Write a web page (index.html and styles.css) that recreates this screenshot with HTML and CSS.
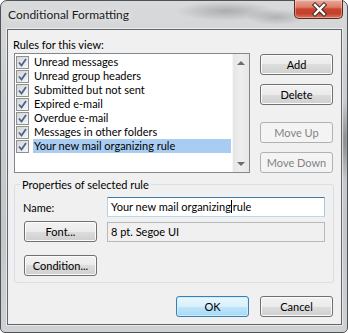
FILE: index.html
```html
<!DOCTYPE html>
<html lang="en">
<head>
  <meta charset="UTF-8" />
  <title>Conditional Formatting</title>
  <link rel="stylesheet" href="styles.css">
</head>
<body>
  <div class="window">
    <div class="titlebar">
      <span class="title">Conditional Formatting</span>
      <div class="close-btn">
        <svg width="49" height="18" viewBox="0 0 49 18">
          <path d="M20 5 L29 14 M29 5 L20 14" stroke="#3b2a26" stroke-width="4.4" stroke-linecap="square"/>
          <path d="M20 5 L29 14 M29 5 L20 14" stroke="#ffffff" stroke-width="2.4" stroke-linecap="square"/>
        </svg>
      </div>
    </div>

    <div class="client">
      <div class="rules-label">Rules for this view:</div>
      <div class="rules-row">
        <div class="listbox">
          <ul class="rule-list">
            <li class="rule"><span class="check"><svg width="11" height="11" viewBox="0 0 11 11"><path d="M2 5.5 L4.5 8.5 L9 2" fill="none" stroke="#4a6390" stroke-width="1.8"/></svg></span><span class="rule-text">Unread messages</span></li>
            <li class="rule"><span class="check"><svg width="11" height="11" viewBox="0 0 11 11"><path d="M2 5.5 L4.5 8.5 L9 2" fill="none" stroke="#4a6390" stroke-width="1.8"/></svg></span><span class="rule-text">Unread group headers</span></li>
            <li class="rule"><span class="check"><svg width="11" height="11" viewBox="0 0 11 11"><path d="M2 5.5 L4.5 8.5 L9 2" fill="none" stroke="#4a6390" stroke-width="1.8"/></svg></span><span class="rule-text">Submitted but not sent</span></li>
            <li class="rule"><span class="check"><svg width="11" height="11" viewBox="0 0 11 11"><path d="M2 5.5 L4.5 8.5 L9 2" fill="none" stroke="#4a6390" stroke-width="1.8"/></svg></span><span class="rule-text">Expired e-mail</span></li>
            <li class="rule"><span class="check"><svg width="11" height="11" viewBox="0 0 11 11"><path d="M2 5.5 L4.5 8.5 L9 2" fill="none" stroke="#4a6390" stroke-width="1.8"/></svg></span><span class="rule-text">Overdue e-mail</span></li>
            <li class="rule"><span class="check"><svg width="11" height="11" viewBox="0 0 11 11"><path d="M2 5.5 L4.5 8.5 L9 2" fill="none" stroke="#4a6390" stroke-width="1.8"/></svg></span><span class="rule-text">Messages in other folders</span></li>
            <li class="rule selected"><span class="check"><svg width="11" height="11" viewBox="0 0 11 11"><path d="M2 5.5 L4.5 8.5 L9 2" fill="none" stroke="#4a6390" stroke-width="1.8"/></svg></span><span class="rule-text">Your new mail organizing rule</span></li>
          </ul>
          <div class="scrollbar">
            <span class="scroll-arrow"><span class="tri-up"></span></span>
            <span class="scroll-arrow"><span class="tri-down"></span></span>
          </div>
        </div>
        <div class="side-buttons">
          <button class="btn">Add</button>
          <button class="btn btn-delete">Delete</button>
          <button class="btn btn-up" disabled>Move Up</button>
          <button class="btn btn-down" disabled>Move Down</button>
        </div>
      </div>

      <fieldset class="props">
        <legend>Properties of selected rule</legend>
        <div class="prop-row">
          <label class="prop-label">Name:</label>
          <div class="textbox">Your new mail organizing<span class="caret"></span>rule</div>
        </div>
        <div class="prop-row row-font">
          <button class="btn btn-small">Font...</button>
          <div class="fontbox">8 pt. Segoe UI</div>
        </div>
        <div class="prop-row row-condition">
          <button class="btn btn-small">Condition...</button>
        </div>
      </fieldset>

      <div class="footer">
        <button class="btn btn-default">OK</button>
        <button class="btn">Cancel</button>
      </div>
    </div>
  </div>
</body>
</html>
```

FILE: styles.css
```css
/* General Reset */
* {
  margin: 0;
  padding: 0;
  box-sizing: border-box;
}

body {
  width: 348px;
  height: 333px;
  overflow: hidden;
  background: #ffffff;
  font-family: Lato, "Noto Sans", sans-serif;
  font-size: 11px;
  color: #000;
}

/* Window frame */
.window {
  width: 348px;
  height: 333px;
  display: flex;
  flex-direction: column;
  padding: 0 5px 7px 6px;
  border: 1px solid #4e5358;
  border-radius: 7px 7px 5px 5px;
  background:
    radial-gradient(ellipse 50px 10px at 225px 10px, rgba(90, 90, 90, 0.35), transparent),
    radial-gradient(ellipse 30px 8px at 275px 16px, rgba(90, 90, 90, 0.3), transparent),
    radial-gradient(ellipse 6px 40px at 344px 140px, rgba(60, 60, 60, 0.45), transparent),
    linear-gradient(180deg, #d8dadc 0%, #c9ccce 30%, #c4c7ca 70%, #cfd1d3 100%);
}

.titlebar {
  height: 28px;
  display: flex;
  justify-content: space-between;
  align-items: flex-start;
}

.title {
  margin: 6px 0 0 1px;
  font-size: 12px;
  line-height: 16px;
  color: #1b1b1b;
  text-shadow: 0 0 6px rgba(255, 255, 255, 0.9);
}

.close-btn {
  width: 49px;
  height: 19px;
  margin: -1px -1px 0 0;
  border: 1px solid #5e2a20;
  border-top: none;
  border-radius: 0 0 5px 5px;
  background: linear-gradient(180deg, #e7aa9c 0%, #dc7c69 40%, #c94530 50%, #c4402b 75%, #d97560 100%);
  box-shadow: inset 0 0 0 1px rgba(255, 255, 255, 0.35);
  overflow: hidden;
}

.close-btn svg {
  display: block;
}

/* Client area */
.client {
  flex: 1;
  background: #f0f0f0;
  border: 1px solid #5f666c;
  box-shadow: 0 0 0 1px rgba(255, 255, 255, 0.55);
  padding: 7px 8px 7px 0;
}

.rules-label {
  padding-left: 5px;
  line-height: 15px;
}

.rules-row {
  display: flex;
  gap: 10px;
  margin: 1px 0 0 6px;
}

.listbox {
  width: 236px;
  height: 120px;
  border: 1px solid #828790;
  background: #fff;
  display: flex;
}

.rule-list {
  flex: 1;
  list-style: none;
  padding-top: 1px;
}

.rule {
  height: 14px;
  display: flex;
  align-items: center;
  padding-left: 1px;
}

.check {
  width: 13px;
  height: 13px;
  margin-right: 4px;
  border: 1px solid #8e8f8f;
  background: linear-gradient(135deg, #d4d4d4, #f7f7f7);
  display: flex;
}

.rule-text {
  flex: 1;
  height: 14px;
  line-height: 14px;
  padding-left: 1px;
  margin-right: 1px;
  white-space: nowrap;
}

.rule.selected .rule-text {
  background: #a9cdf2;
}

.scrollbar {
  width: 17px;
  display: flex;
  flex-direction: column;
  justify-content: space-between;
  background: linear-gradient(90deg, #e6e6e6, #eeeeee 50%, #e7e7e7);
  border-left: 1px solid #f7f7f7;
}

.scroll-arrow {
  height: 17px;
  display: flex;
  align-items: center;
  justify-content: center;
}

.tri-up {
  width: 0;
  height: 0;
  border-left: 4px solid transparent;
  border-right: 4px solid transparent;
  border-bottom: 4px solid #6d6d6d;
}

.tri-down {
  width: 0;
  height: 0;
  border-left: 4px solid transparent;
  border-right: 4px solid transparent;
  border-top: 4px solid #6d6d6d;
}

.side-buttons {
  display: flex;
  flex-direction: column;
  padding-top: 1px;
}

/* Buttons */
.btn {
  width: 73px;
  height: 21px;
  border: 1px solid #707070;
  border-radius: 3px;
  background: linear-gradient(180deg, #f2f2f2 0%, #ebebeb 50%, #dddddd 50%, #cfcfcf 100%);
  box-shadow: inset 0 0 0 1px #fbfbfb;
  font-family: inherit;
  font-size: 11px;
  line-height: 19px;
  color: #000;
  text-align: center;
}

.btn:disabled {
  border-color: #adb2b5;
  background: #f4f4f4;
  box-shadow: none;
  color: #838383;
}

.btn-delete {
  margin-top: 9px;
}

.btn-up {
  margin-top: 17px;
}

.btn-down {
  margin-top: 9px;
}

.btn-default {
  border-color: #3c7fb1;
  background: linear-gradient(180deg, #eaf6fd 0%, #d9f0fc 50%, #bee6fd 50%, #a7d9f5 100%);
  box-shadow: inset 0 0 0 1px #cdeefc;
}

/* Properties group */
.props {
  width: 320px;
  margin: 4px 0 0 6px;
  padding: 5px 8px 6px 7px;
  border: 1px solid #d5dfe5;
  border-radius: 3px;
}

.props legend {
  padding: 0 2px;
  margin-left: -2px;
  line-height: 15px;
}

.prop-row {
  display: flex;
  align-items: center;
}

.row-font {
  margin-top: 4px;
}

.row-condition {
  margin-top: 13px;
}

.prop-label {
  width: 85px;
  padding-left: 1px;
}

.btn-small {
  margin-left: 2px;
}

.textbox {
  width: 218px;
  height: 20px;
  line-height: 18px;
  padding-left: 3px;
  background: #fff;
  border: 1px solid;
  border-color: #3d7bad #a4c9e3 #b7d9ed #b5cfe7;
  white-space: nowrap;
}

.caret {
  display: inline-block;
  width: 1px;
  height: 13px;
  margin-right: 1px;
  background: #000;
  vertical-align: -2px;
}

.fontbox {
  width: 218px;
  height: 20px;
  margin-left: 10px;
  line-height: 18px;
  padding-left: 3px;
  background: #f0f0f0;
  border: 1px solid #b9b9b9;
}

.footer {
  display: flex;
  justify-content: flex-end;
  gap: 11px;
  margin-top: 13px;
}
```
